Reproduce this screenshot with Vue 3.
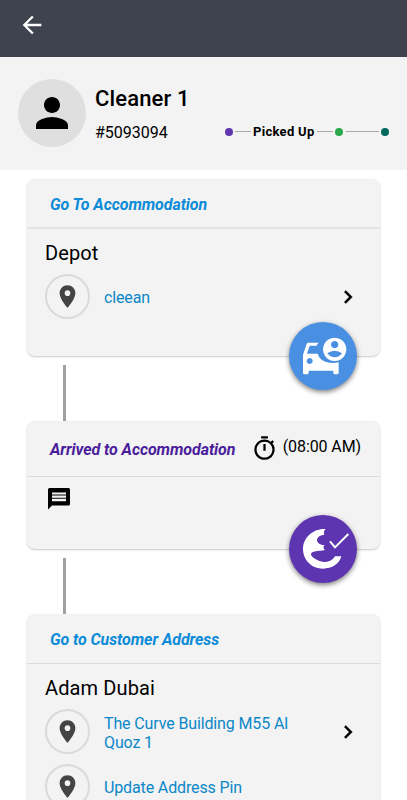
<script setup>
const PATHS = {
  back: 'M20 11H7.83l5.59-5.59L12 4l-8 8 8 8 1.41-1.41L7.83 13H20v-2z',
  person: 'M12 12c2.21 0 4-1.79 4-4s-1.79-4-4-4-4 1.79-4 4 1.79 4 4 4zm0 2c-2.67 0-8 1.34-8 4v2h16v-2c0-2.66-5.33-4-8-4z',
  pin: 'M12 2C8.13 2 5 5.13 5 9c0 5.25 7 13 7 13s7-7.75 7-13c0-3.87-3.13-7-7-7zm0 9.5a2.5 2.5 0 0 1 0-5 2.5 2.5 0 0 1 0 5z',
  next: 'M10 6L8.59 7.41 13.17 12l-4.58 4.59L10 18l6-6z',
  timer: 'M15 1H9v2h6V1zm-4 13h2V8h-2v6zm8.03-6.61l1.42-1.42c-.43-.51-.9-.99-1.41-1.41l-1.42 1.42A8.962 8.962 0 0 0 12 4c-4.97 0-9 4.03-9 9s4.02 9 9 9a8.994 8.994 0 0 0 7.03-14.61zM12 20c-3.87 0-7-3.13-7-7s3.13-7 7-7 7 3.13 7 7-3.13 7-7 7z',
}

const order = { name: 'Cleaner 1', id: '#5093094', status: 'Picked Up' }

const steps = [
  { title: 'Go To Accommodation', kind: 'go', fab: 'car', place: 'Depot', rows: [{ text: 'cleean', next: true }] },
  { title: 'Arrived to Accommodation', kind: 'arrived', fab: 'done', time: '(08:00 AM)', note: true },
  {
    title: 'Go to Customer Address', kind: 'customer', place: 'Adam Dubai',
    rows: [{ text: 'The Curve Building M55 Al Quoz 1', next: true }, { text: 'Update Address Pin' }],
  },
]
</script>

<template>
  <div class="app">
    <header class="bar">
      <svg class="back" viewBox="0 0 24 24"><path :d="PATHS.back" /></svg>
    </header>

    <section class="profile">
      <div class="avatar"><svg viewBox="0 0 24 24"><path :d="PATHS.person" /></svg></div>
      <div class="who">
        <div class="name">{{ order.name }}</div>
        <div class="meta">
          <span class="oid">{{ order.id }}</span>
          <div class="track">
            <i class="dot violet"></i><i class="seg"></i>
            <b>{{ order.status }}</b>
            <i class="seg"></i><i class="dot green"></i><i class="seg long"></i><i class="dot teal"></i>
          </div>
        </div>
      </div>
    </section>

    <main class="steps">
      <template v-for="(s, i) in steps" :key="i">
        <div v-if="i" class="link"></div>
        <article class="card" :class="s.kind">
          <div class="head">
            <h2>{{ s.title }}</h2>
            <div v-if="s.time" class="time">
              <svg viewBox="0 0 24 24"><path :d="PATHS.timer" /></svg>
              <span>{{ s.time }}</span>
            </div>
          </div>
          <div class="body">
            <h3 v-if="s.place">{{ s.place }}</h3>
            <div v-for="r in s.rows" :key="r.text" class="row">
              <span class="ring"><svg viewBox="0 0 24 24"><path :d="PATHS.pin" /></svg></span>
              <span class="addr">{{ r.text }}</span>
              <svg v-if="r.next" class="next" viewBox="0 0 24 24"><path :d="PATHS.next" /></svg>
            </div>
            <svg v-if="s.note" class="note" viewBox="0 0 24 24">
              <path d="M1 2.5Q1 1 2.5 1H21.5Q23 1 23 2.5V17Q23 18.5 21.5 18.5H5L1 22.5Z" />
              <path class="lines" d="M5 5.5H19V7.5H5ZM5 8.5H19V10.8H5ZM5 11.8H19V14.3H5Z" />
            </svg>
          </div>
          <div v-if="s.fab" class="fab" :class="s.fab">
            <svg v-if="s.fab === 'car'" viewBox="0 0 204 204">
              <path fill-rule="evenodd" d="M58 62H89Q84 66 83 71H62L54 95H86Q92 113 109 119Q129 126 149 121V152Q149 157 144 157H138Q133 157 133 152V146H59V152Q59 157 54 157H47Q42 157 42 152V98L53 66Q54 62 58 62ZM62 108a9 9 0 1 0 .1 0Z" />
              <path fill-rule="evenodd" d="M137 47a35 35 0 1 0 .1 0ZM137 57a11 11 0 1 1-.1 0ZM115 94Q125 86 137 86Q149 86 159 94Q150 106 137 106Q124 106 115 94Z" />
            </svg>
            <svg v-else viewBox="0 0 204 204">
              <path d="M110 42C74 39 42 67 42 102C42 136 69 161 102 161C129 161 151 147 157 124H138C130 137 116 143 101 140C83 137 66 126 66 117C67 107 88 110 108 105C102 100 102 94 107 90C93 91 84 83 84 75C84 65 96 60 106 59C103 53 105 46 110 42Z" />
              <path class="tick" d="M123 79L138 97L178 57" />
            </svg>
          </div>
        </article>
      </template>
    </main>
  </div>
</template>

<style>
body { margin:0; background:#fff; overflow:hidden; }
</style>

<style scoped>
* { box-sizing:border-box; }
.app { height:800px; overflow:hidden; background:#fff; color:#000; font-family:Roboto,sans-serif; }
svg { display:block; flex:none; }
.bar { height:57px; padding:11px 18px; background:#3f434d; }
.back { width:28px; height:28px; fill:#fff; }
.profile { height:113px; padding:0 18px 1px; display:flex; align-items:center; gap:9px; background:#f3f3f3; }
.avatar { flex:none; width:68px; height:68px; border-radius:50%; background:#dfdfdf; display:flex; align-items:center; justify-content:center; }
.avatar svg { width:48px; height:48px; }
.who { flex:1; padding-top:2px; }
.name { font-size:22px; font-weight:500; line-height:26px; letter-spacing:.15px; margin-bottom:11px; }
.meta { display:flex; align-items:center; justify-content:space-between; }
.oid { font-size:16px; line-height:20px; }
.track { display:flex; align-items:center; margin-top:-2px; }
.track b { width:62px; font-size:13px; line-height:16px; font-weight:700; letter-spacing:.3px; white-space:nowrap; margin:0 2px; }
.dot { width:8px; height:8px; border-radius:50%; }
.violet { background:#5e35b1; } .green { background:#2aa84a; } .teal { background:#00695c; }
.seg { width:16px; height:1px; margin:0 2px; background:#aaa; } .seg.long { width:33px; margin:0 2px 0 3px; }
.track b + .seg { margin-left:0; } .violet + .seg { margin-right:0; }
.steps { padding:9px 27px 0; }
.link { width:3px; height:56px; margin:9px 0 0 36px; background:#a0a0a0; }
.card { position:relative; height:177px; border-radius:8px; background:#f3f3f3; box-shadow:0 1px 2px rgba(0,0,0,.22); }
.card.arrived { height:128px; }
.card.customer { height:240px; }
.head { height:50px; padding:1px 19px 0 23px; display:flex; align-items:center; justify-content:space-between; border-bottom:2px solid #e4e4e4; }
.arrived .head { height:56px; border-bottom:1px solid #dcdcdc; }
.customer .head { border-bottom:1px solid #dcdcdc; }
h2 { margin:0; padding-top:1px; font-size:16px; font-weight:700; font-style:italic; letter-spacing:-.08px; color:#0b8bd8; white-space:nowrap; }
.arrived h2 { color:#4c1d9b; }
.time { display:flex; align-items:center; gap:5px; margin-top:-2px; font-size:16px; letter-spacing:-.1px; white-space:nowrap; }
.time svg { width:27px; height:27px; }
.time span { margin-top:-4px; }
.body { padding:11px 18px 0; }
.arrived .body { padding:10px 20px 0; }
h3 { margin:0 0 8px; font-size:20px; line-height:26px; font-weight:400; letter-spacing:.12px; }
.row { display:flex; align-items:center; margin-bottom:10px; }
.ring { flex:none; width:45px; height:45px; border:2px solid #dadada; border-radius:50%; display:flex; align-items:center; justify-content:center; }
.ring svg { width:27px; height:27px; fill:#444; }
.addr { flex:1; margin-left:14px; padding:2px 30px 0 0; font-size:16px; line-height:19px; letter-spacing:-.13px; color:#0b87c9; }
.next { width:26px; height:26px; margin-right:1px; stroke:#000; stroke-width:.4; }
.note { width:24px; height:24px; }
.lines { fill:#f3f3f3; }
.fab { position:absolute; right:23px; bottom:-34px; width:68px; height:68px; border-radius:50%; box-shadow:0 2px 5px rgba(0,0,0,.5); }
.fab svg { width:68px; height:68px; fill:#fff; }
.car { background:#4a90e2; } .done { background:#5e35b1; }
.fab .tick { fill:none; stroke:#fff; stroke-width:6; }
</style>
